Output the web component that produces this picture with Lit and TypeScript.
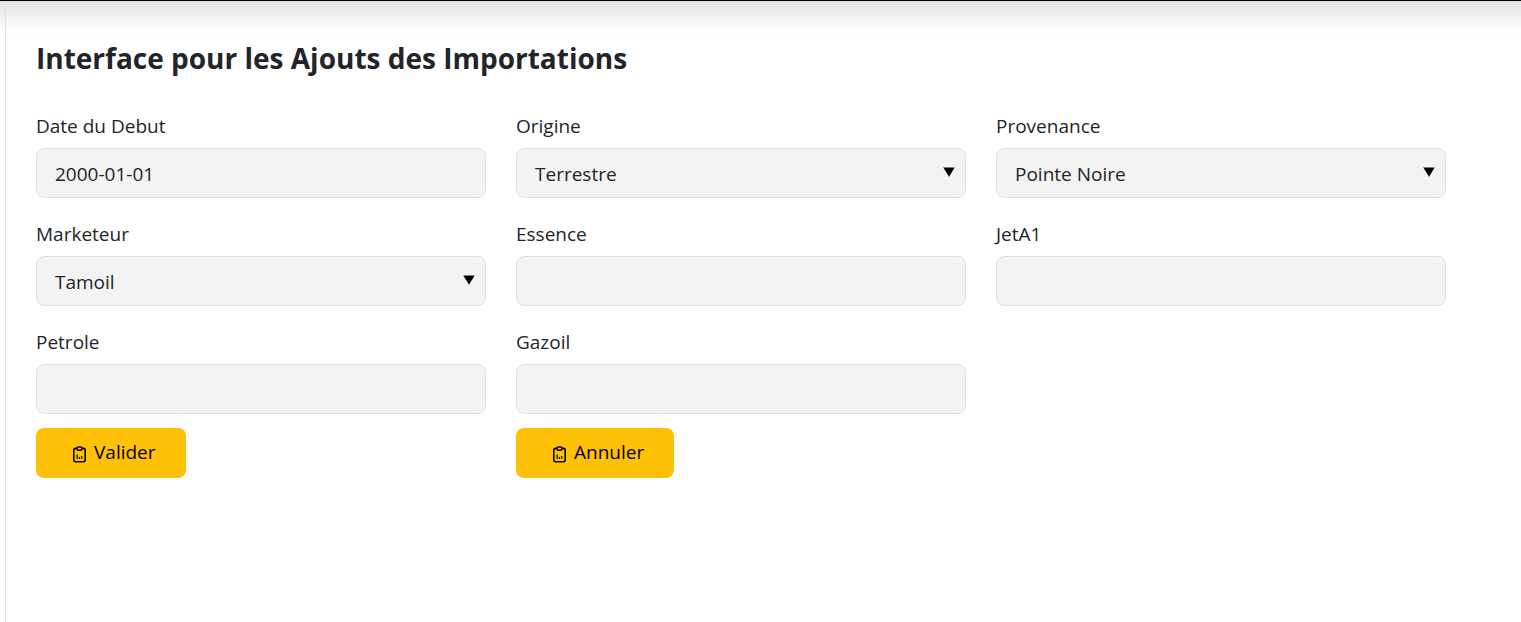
import { LitElement, html, css } from "lit";
import { customElement, property } from "lit/decorators.js";

interface Field {
  id: string;
  label: string;
  value?: string;
  options?: string[];
}

const FIELDS: Field[] = [
  { id: "date", label: "Date du Debut", value: "2000-01-01" },
  { id: "origine", label: "Origine", options: ["Terrestre"] },
  { id: "provenance", label: "Provenance", options: ["Pointe Noire"] },
  { id: "marketeur", label: "Marketeur", options: ["Tamoil"] },
  { id: "essence", label: "Essence" },
  { id: "jeta1", label: "JetA1" },
  { id: "petrole", label: "Petrole" },
  { id: "gazoil", label: "Gazoil" },
];

@customElement("form-field")
class FormField extends LitElement {
  @property({ attribute: false }) field!: Field;

  static styles = css`
    :host {
      display: flex;
      flex-direction: column;
      gap: 8px;
      min-width: 0;
    }
    .label {
      font-size: 19px;
      line-height: 28px;
      align-self: flex-start;
    }
    .control {
      display: grid;
      align-items: center;
    }
    .box {
      grid-area: 1 / 1;
      box-sizing: border-box;
      width: 100%;
      height: 50px;
      margin: 0;
      padding: 2px 18px 0;
      border: 1px solid #dee2e6;
      border-radius: 8px;
      background: #f3f3f3;
      color: inherit;
      font: inherit;
      font-size: 19px;
      line-height: 28px;
      appearance: none;
      outline: none;
    }
    .box:focus-visible {
      border-color: #ffc107;
    }
    .caret {
      grid-area: 1 / 1;
      justify-self: end;
      margin: 0 11px 2px 0;
      pointer-events: none;
      fill: #000;
    }
  `;

  render() {
    const { id, label, value, options } = this.field;
    return html`
      <label class="label" for=${id}>${label}</label>
      <div class="control">
        ${options
          ? html`<select class="box" id=${id}>
                ${options.map((o) => html`<option>${o}</option>`)}
              </select>
              <svg class="caret" width="12" height="10" viewBox="0 0 12 10" aria-hidden="true">
                <path d="M.3.5h11.4L6 9.7z" />
              </svg>`
          : html`<input class="box" id=${id} type="text" .value=${value ?? ""} />`}
      </div>
    `;
  }
}

@customElement("action-button")
class ActionButton extends LitElement {
  @property() label = "";

  static styles = css`
    :host {
      display: block;
    }
    .button {
      display: inline-flex;
      align-items: center;
      gap: 7px;
      height: 50px;
      padding: 0 30px 0 36px;
      border: 0;
      border-radius: 8px;
      background: #ffc107;
      color: #000;
      font: inherit;
      font-size: 19px;
      line-height: 28px;
      cursor: pointer;
    }
    .text {
      padding-bottom: 2px;
    }
    .icon {
      margin-top: 3px;
      fill: none;
      stroke: #000;
      stroke-width: 1.6;
      stroke-linejoin: round;
    }
  `;

  render() {
    return html`
      <button class="button" type="button">
        <svg class="icon" width="15" height="17" viewBox="0 0 15 17" aria-hidden="true">
          <path d="M5 2.4H3.4a1.6 1.6 0 0 0-1.6 1.6v10.2a1.6 1.6 0 0 0 1.6 1.6h8.2a1.6 1.6 0 0 0 1.6-1.6V4a1.6 1.6 0 0 0-1.6-1.6H10" />
          <rect x="5" y="1" width="5" height="3.2" rx="1.5" />
          <path d="M5.2 8.5V13M7.5 11v2M9.8 10v3" stroke-width="1.2" />
        </svg>
        <span class="text">${this.label}</span>
      </button>
    `;
  }
}

@customElement("app-root")
class AppRoot extends LitElement {
  static styles = css`
    :host {
      display: flex;
      flex-direction: column;
      min-height: 100vh;
      background: linear-gradient(
          rgba(0, 0, 0, 0.11) 0,
          rgba(0, 0, 0, 0.095) 7px,
          rgba(0, 0, 0, 0.05) 17px,
          rgba(0, 0, 0, 0.015) 28px,
          transparent 40px
        )
        #fff;
      color: #212529;
      font-family: "Segoe UI", "Open Sans", "Noto Sans", sans-serif;
    }
    .topbar {
      height: 1px;
      background: #000;
    }
    .page {
      flex: 1;
      margin-left: 5px;
      padding: 35px 75px 35px 30px;
      border-left: 1px solid #dee2e6;
    }
    .title {
      margin: 0 0 32px;
      font-size: 28px;
      line-height: 44px;
      font-weight: 700;
    }
    .grid {
      display: grid;
      grid-template-columns: repeat(3, minmax(0, 1fr));
      gap: 22px 30px;
    }
    .actions {
      display: grid;
      grid-template-columns: repeat(3, minmax(0, 1fr));
      gap: 30px;
      margin-top: 14px;
    }
  `;

  render() {
    return html`
      <div class="topbar"></div>
      <main class="page">
        <h1 class="title">Interface pour les Ajouts des Importations</h1>
        <form>
          <div class="grid">
            ${FIELDS.map((f) => html`<form-field .field=${f}></form-field>`)}
          </div>
          <div class="actions">
            <action-button label="Valider"></action-button>
            <action-button label="Annuler"></action-button>
          </div>
        </form>
      </main>
    `;
  }
}
